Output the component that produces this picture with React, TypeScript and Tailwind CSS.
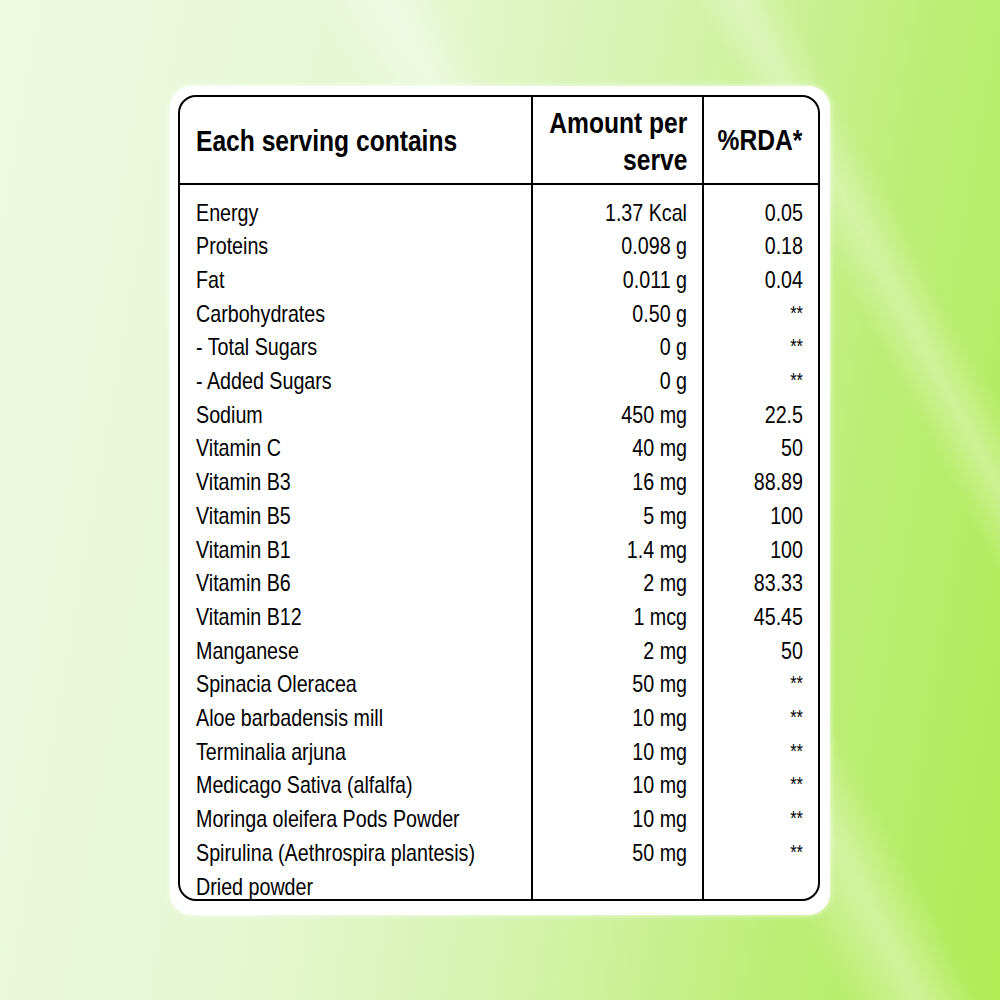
const rows: [string, string, string][] = [
  ['Energy', '1.37 Kcal', '0.05'],
  ['Proteins', '0.098 g', '0.18'],
  ['Fat', '0.011 g', '0.04'],
  ['Carbohydrates', '0.50 g', '**'],
  ['- Total Sugars', '0 g', '**'],
  ['- Added Sugars', '0 g', '**'],
  ['Sodium', '450 mg', '22.5'],
  ['Vitamin C', '40 mg', '50'],
  ['Vitamin B3', '16 mg', '88.89'],
  ['Vitamin B5', '5 mg', '100'],
  ['Vitamin B1', '1.4 mg', '100'],
  ['Vitamin B6', '2 mg', '83.33'],
  ['Vitamin B12', '1 mcg', '45.45'],
  ['Manganese', '2 mg', '50'],
  ['Spinacia Oleracea', '50 mg', '**'],
  ['Aloe barbadensis mill', '10 mg', '**'],
  ['Terminalia arjuna', '10 mg', '**'],
  ['Medicago Sativa (alfalfa)', '10 mg', '**'],
  ['Moringa oleifera Pods Powder', '10 mg', '**'],
  ['Spirulina (Aethrospira plantesis)', '50 mg', '**'],
]

// the label uses a narrow grotesque; squeeze Liberation Sans to match
const narrowL = 'origin-left scale-x-[0.82] whitespace-nowrap'
const narrowR = 'origin-right scale-x-[0.82] whitespace-nowrap shrink-0'

export default function App() {
  return (
    <div className="w-[1000px] h-[1000px] flex items-center justify-center font-['Liberation_Sans',Arial,sans-serif] text-black bg-[linear-gradient(62deg,transparent_55%,rgba(255,255,255,0.35)_60%,transparent_64%,transparent_80%,rgba(255,255,255,0.3)_83%,transparent_86%),linear-gradient(100deg,#eef9e0_0%,#e6f7d2_35%,#d2f3a8_60%,#bcee76_80%,#b0eb55_100%)]">
      <div className="w-[660px] h-[829px] bg-white rounded-[22px] pl-2 pr-2.5 pt-[9px] pb-[14px] shadow-[0_0_6px_rgba(255,255,255,0.8)]">
        <div className="h-full border-2 border-black rounded-[18px] flex flex-col overflow-hidden">
          <div className="shrink-0 grid grid-cols-[353px_171px_minmax(0,1fr)] h-[88px] border-b-2 border-black font-bold text-[30px]">
            <div className="flex items-center pl-4 pt-0.5 border-r-2 border-black">
              <div className={narrowL}>Each serving contains</div>
            </div>
            <div className="flex items-center justify-end pr-[15px] pt-0.5 border-r-2 border-black">
              <div className={narrowR + ' flex flex-col items-end leading-[37px]'}>
                <span>Amount per</span>
                <span>serve</span>
              </div>
            </div>
            <div className="flex items-center justify-end pr-4">
              <div className={narrowR}>%RDA*</div>
            </div>
          </div>
          <div className="grid grid-cols-[353px_171px_minmax(0,1fr)] flex-1 min-h-0 text-[24px] leading-[33.7px]">
            <div className="pl-4 pt-[11px] border-r-2 border-black">
              <div className={narrowL}>
                {rows.map((r) => (
                  <div key={r[0]}>{r[0]}</div>
                ))}
                <div>Dried powder</div>
              </div>
            </div>
            <div className="pr-[15px] pt-[11px] border-r-2 border-black">
              <div className={narrowR + ' text-right'}>
                {rows.map((r) => (
                  <div key={r[0]}>{r[1]}</div>
                ))}
              </div>
            </div>
            <div className="pr-[15px] pt-[11px]">
              <div className={narrowR + ' text-right'}>
                {rows.map((r) => (
                  <div key={r[0]} className={r[2] === '**' ? 'text-[20px] leading-[33.7px] font-medium' : ''}>
                    {r[2]}
                  </div>
                ))}
              </div>
            </div>
          </div>
        </div>
      </div>
    </div>
  )
}
